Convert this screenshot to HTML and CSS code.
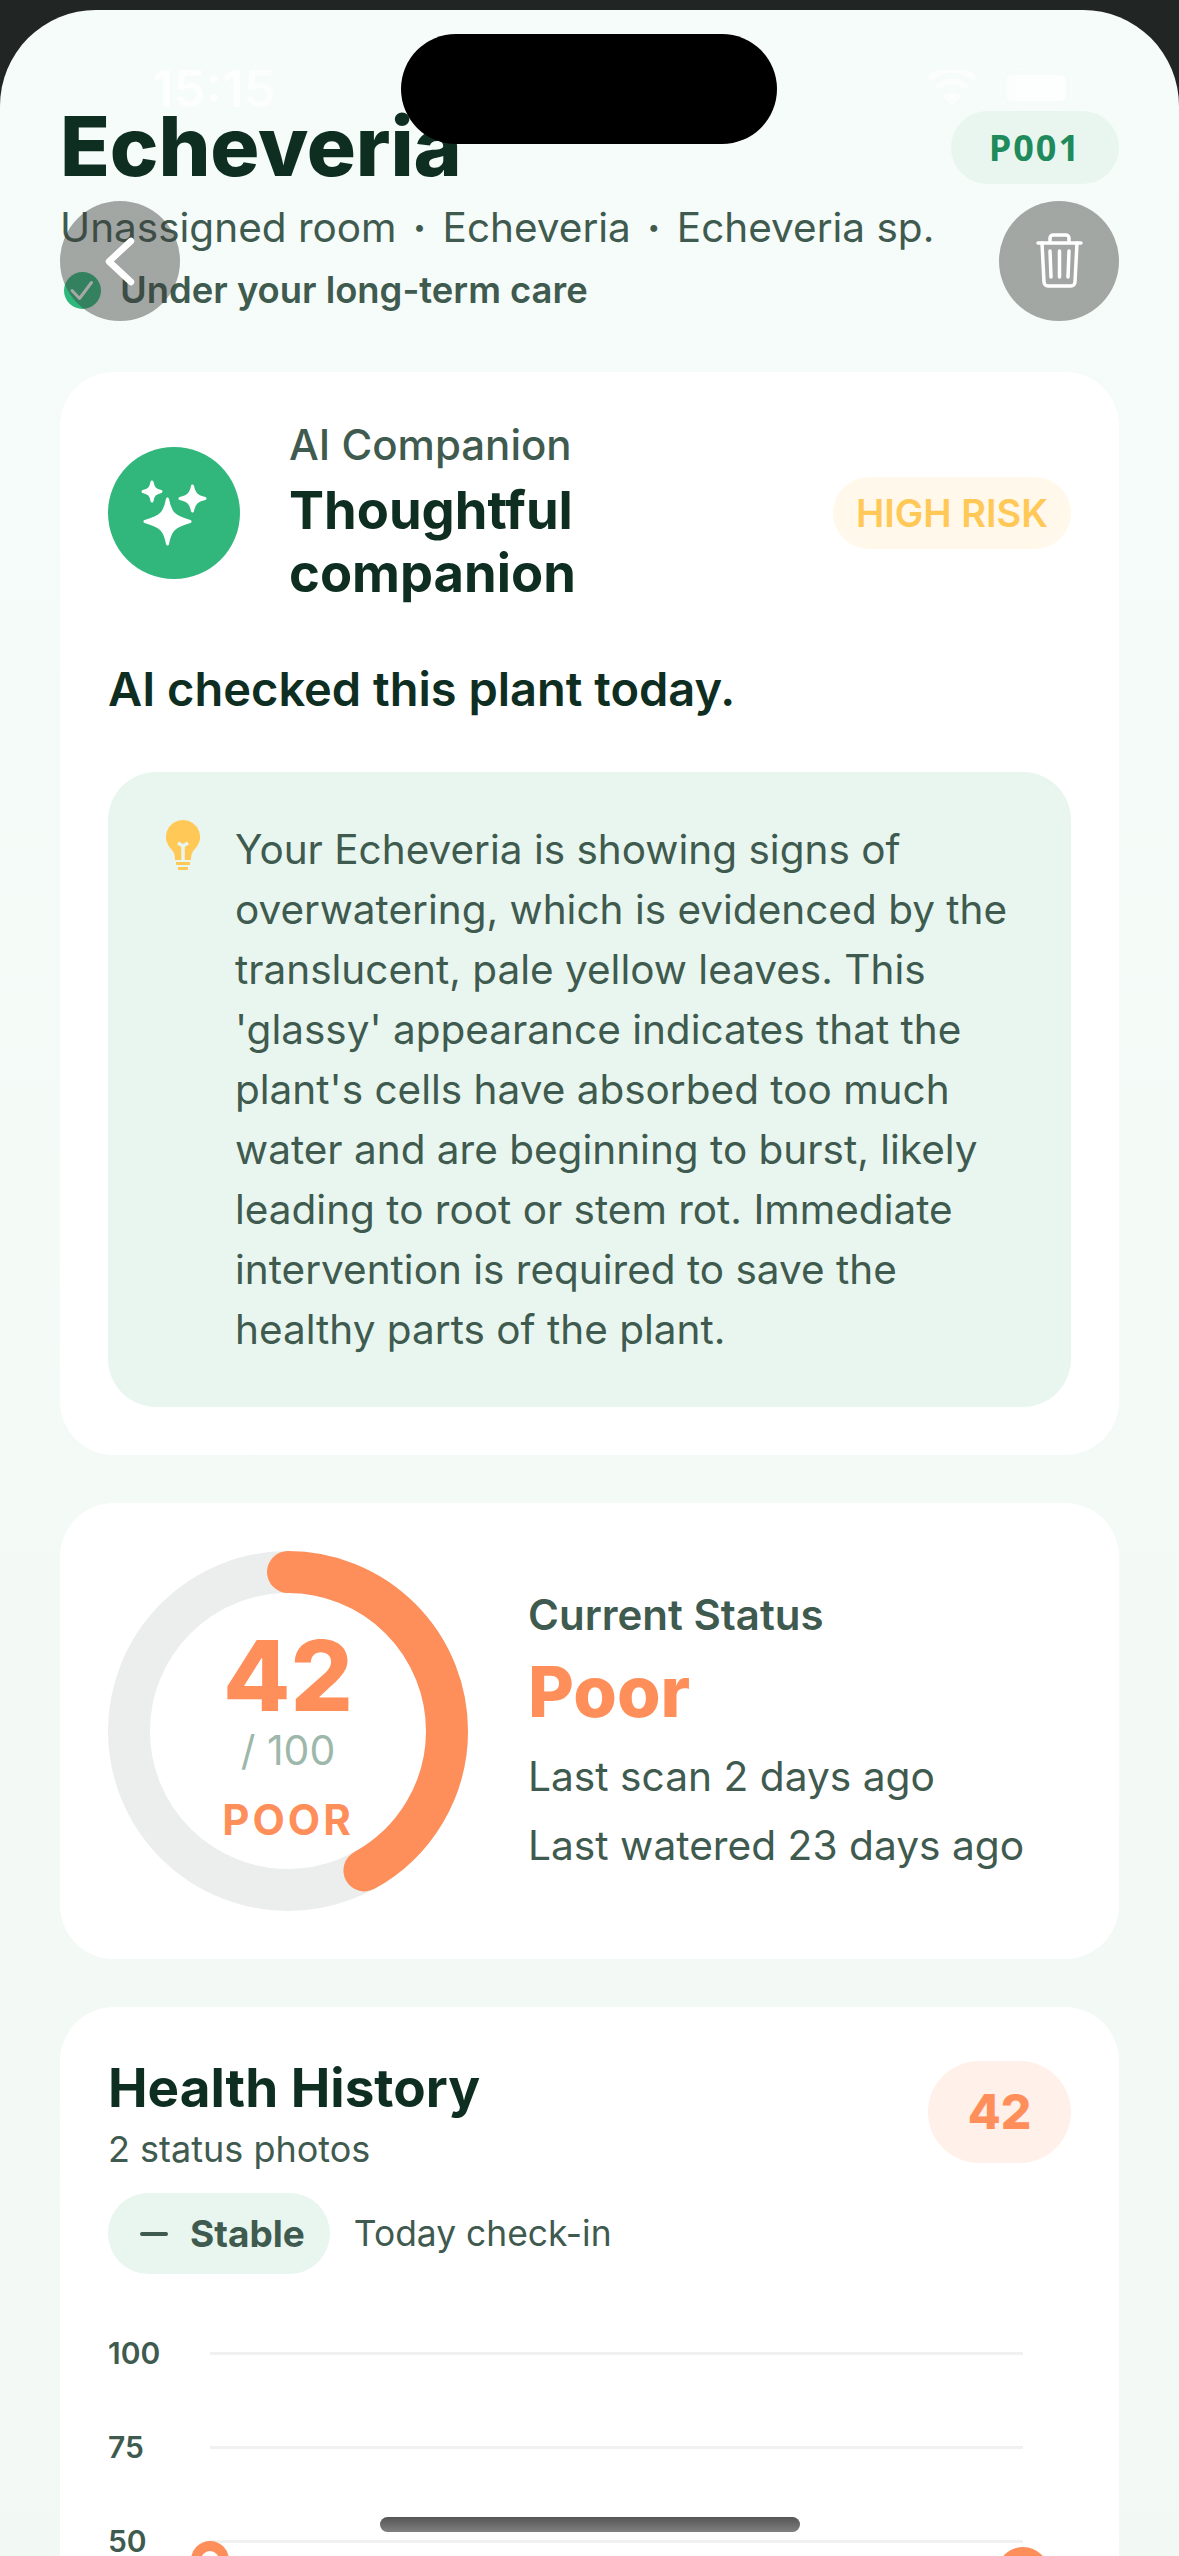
FILE: index.html
```html
<!DOCTYPE html>
<html>
<head>
	<title>Echeveria</title>
	<link rel="stylesheet" href="styles.css">
</head>
<body>
	<div class="screen">
		<div class="status-bar">
			<span class="clock">15:15</span>
			<div class="status-icons">
				<svg width="50" height="36" viewBox="0 0 50 36"><path d="M25 36 L16 26 A13 13 0 0 1 34 26 Z" fill="#fff"/><path d="M10 18 A21 21 0 0 1 40 18" fill="none" stroke="#fff" stroke-width="6"/><path d="M2 9 A33 33 0 0 1 48 9" fill="none" stroke="#fff" stroke-width="6"/></svg>
				<div class="battery"><div class="battery-fill"></div></div>
			</div>
		</div>
		<div class="island"></div>

		<header class="top">
			<div class="title-row">
				<h1 class="plant-name">Echeveria</h1>
				<span class="plant-id">P001</span>
			</div>
			<p class="plant-meta">Unassigned room<span class="sep">·</span>Echeveria<span class="sep">·</span>Echeveria sp.</p>
			<div class="care">
				<svg class="care-icon" width="37" height="37" viewBox="0 0 37 37"><circle cx="18.5" cy="18.5" r="18.5" fill="#2fb87c"/><path d="M8 18.5 L15.5 26.5 L27.5 10.5" fill="none" stroke="#fff" stroke-width="3" stroke-linecap="round" stroke-linejoin="round"/></svg>
				<span>Under your long-term care</span>
			</div>
		</header>

		<button class="round-btn back-btn">
			<svg width="32" height="54" viewBox="0 0 32 54"><path d="M27 7 L5 27.5 L27 48" fill="none" stroke="#fff" stroke-width="6.5" stroke-linecap="round" stroke-linejoin="round"/></svg>
		</button>
		<button class="round-btn trash-btn">
			<svg width="48" height="56" viewBox="0 0 48 56" fill="none" stroke="#fff" stroke-width="3.5" stroke-linecap="round" stroke-linejoin="round"><path d="M3 10 H46"/><path d="M15 9 V5 A3 3 0 0 1 18 2 H31 A3 3 0 0 1 34 5 V9"/><path d="M7 10 L9 49 A4 4 0 0 0 13 53 H36 A4 4 0 0 0 40 49 L42 10"/><path d="M15 18 L16 44"/><path d="M24.5 18 V44"/><path d="M34 18 L33 44"/></svg>
		</button>

		<section class="card ai-card">
			<div class="ai-head">
				<div class="ai-icon">
					<svg width="132" height="132" viewBox="0 0 132 132" fill="#fff" stroke="#fff" stroke-width="3" stroke-linejoin="round"><path d="M59.5 52 C62 66 66 70 82 74.5 C66 79 62 83 59.5 97 C57 83 53 79 37 74.5 C53 70 57 66 59.5 52 Z"/><path d="M44 35 C45 41 47 43 53 44.5 C47 46 45 48 44 54 C43 48 41 46 35 44.5 C41 43 43 41 44 35 Z"/><path d="M84.5 39 C86 47 89 49.5 97 51.5 C89 53.5 86 56 84.5 64 C83 56 80 53.5 72 51.5 C80 49.5 83 47 84.5 39 Z"/></svg>
				</div>
				<div class="ai-titles">
					<div class="ai-label">AI Companion</div>
					<div class="ai-name">Thoughtful<br>companion</div>
				</div>
				<span class="risk">HIGH RISK</span>
			</div>
			<p class="ai-check">AI checked this plant today.</p>
			<div class="tip">
				<svg class="tip-icon" width="34" height="51" viewBox="0 0 34 51"><path d="M17 0 A17 17 0 0 1 28 30 C26 32 25 35 25 40 H9 C9 35 8 32 6 30 A17 17 0 0 1 17 0 Z" fill="#ffc857"/><path d="M12 23 L17 26 L22 23 M17 26 V40" fill="none" stroke="#e8f6ef" stroke-width="3.5"/><rect x="10" y="42" width="14" height="3" fill="#ffc857"/><rect x="12" y="47" width="10" height="3" fill="#ffc857"/></svg>
				<p class="tip-text">Your Echeveria is showing signs of overwatering, which is evidenced by the translucent, pale yellow leaves. This 'glassy' appearance indicates that the plant's cells have absorbed too much water and are beginning to burst, likely leading to root or stem rot. Immediate intervention is required to save the healthy parts of the plant.</p>
			</div>
		</section>

		<section class="card status-card">
			<div class="ring">
				<svg width="360" height="360" viewBox="0 0 360 360">
					<circle cx="180" cy="180" r="159" fill="none" stroke="#eceeed" stroke-width="42"/>
					<circle cx="180" cy="180" r="159" fill="none" stroke="#ff8f5a" stroke-width="42" stroke-linecap="round" stroke-dasharray="419.6 999" transform="rotate(-90 180 180)"/>
				</svg>
				<div class="ring-text">
					<div class="ring-score">42</div>
					<div class="ring-max">/ 100</div>
					<div class="ring-label">POOR</div>
				</div>
			</div>
			<div class="status-info">
				<div class="status-label">Current Status</div>
				<div class="status-value">Poor</div>
				<div class="status-line">Last scan 2 days ago</div>
				<div class="status-line">Last watered 23 days ago</div>
			</div>
		</section>

		<section class="card history-card">
			<div class="history-head">
				<div>
					<h2 class="history-title">Health History</h2>
					<div class="history-sub">2 status photos</div>
				</div>
				<span class="history-score">42</span>
			</div>
			<div class="trend-row">
				<span class="trend"><span class="trend-dash"></span>Stable</span>
				<span class="trend-note">Today check-in</span>
			</div>
			<div class="chart">
				<div class="chart-row"><span class="chart-num">100</span><span class="chart-line"></span></div>
				<div class="chart-row"><span class="chart-num">75</span><span class="chart-line"></span></div>
				<div class="chart-row"><span class="chart-num">50</span><span class="chart-line"></span></div>
				<span class="point point-a"></span>
				<span class="point point-b"></span>
			</div>
		</section>

		<div class="home-bar"></div>
	</div>
</body>
</html>
```

FILE: styles.css
```css
*{
	box-sizing: border-box;
}
html, body{
	margin: 0;
	width: 1179px;
	height: 2556px;
	overflow: hidden;
	background: #212524;
}
body{
	padding-top: 10px;
	font-family: Inter, "Noto Sans", sans-serif;
	color: #3f5a4e;
}
.screen{
	position: relative;
	height: 2546px;
	overflow: hidden;
	border-radius: 96px 96px 0 0;
	background: linear-gradient(180deg, #f6fcf9 0%, #f2f8f4 100%);
	padding: 88px 60px 0;
}
h1, h2, p{
	margin: 0;
}

.status-bar{
	position: absolute;
	top: 56px;
	left: 152px;
	right: 107px;
	height: 44px;
	display: flex;
	justify-content: space-between;
	align-items: center;
	opacity: 0.75;
	color: #fff;
}
.clock{
	font-size: 51px;
	font-weight: 600;
}
.status-icons{
	display: flex;
	align-items: center;
	gap: 23px;
}
.battery{
	width: 72px;
	height: 38px;
	padding: 5px;
	border: 1px solid rgba(255, 255, 255, 0.5);
	border-radius: 12px;
}
.battery-fill{
	height: 100%;
	border-radius: 6px;
	background: #fff;
}
.island{
	position: absolute;
	top: 24px;
	left: 401px;
	width: 376px;
	height: 110px;
	border-radius: 55px;
	background: #000;
}

.title-row{
	display: flex;
	justify-content: space-between;
	align-items: center;
}
.plant-name{
	font-size: 82px;
	font-weight: 800;
	line-height: 98px;
	color: #0f2e22;
	letter-spacing: -0.2px;
}
.plant-id{
	display: block;
	padding: 0 38px;
	height: 73px;
	line-height: 73px;
	border-radius: 37px;
	background: #e8f6ef;
	color: #1f8a5b;
	font-family: "Open Sans", sans-serif;
	font-size: 36px;
	font-weight: 700;
	letter-spacing: 2px;
}
.plant-meta{
	margin-top: 4px;
	font-size: 40.5px;
	line-height: 56px;
}
.sep{
	display: inline-block;
	width: 46px;
	text-align: center;
	font-weight: 700;
}
.care{
	margin-top: 11px;
	display: flex;
	align-items: center;
	gap: 19px;
	padding-left: 4px;
	font-size: 36.4px;
	font-weight: 600;
	line-height: 46px;
}
.round-btn{
	position: absolute;
	top: 191px;
	width: 120px;
	height: 120px;
	border: none;
	border-radius: 50%;
	padding: 0;
	display: flex;
	align-items: center;
	justify-content: center;
	background: rgba(60, 62, 60, 0.45);
}
.back-btn{
	left: 60px;
}
.trash-btn{
	right: 60px;
}

.card{
	background: #fff;
	border-radius: 54px;
	padding: 48px;
	margin-bottom: 48px;
}
.ai-card{
	margin-top: 59px;
}
.ai-head{
	display: flex;
	align-items: center;
}
.ai-icon{
	width: 132px;
	height: 132px;
	border-radius: 50%;
	background: #31b77c;
	flex-shrink: 0;
}
.ai-titles{
	margin-left: 49px;
	flex: 1;
}
.ai-label{
	font-size: 42px;
	font-weight: 500;
	line-height: 50px;
}
.ai-name{
	margin-top: 9px;
	font-size: 52.5px;
	font-weight: 700;
	line-height: 63px;
	color: #0f2e22;
}
.risk{
	width: 238px;
	height: 72px;
	line-height: 72px;
	text-align: center;
	border-radius: 36px;
	background: #fff8eb;
	color: #ffc857;
	font-size: 38px;
	font-weight: 600;
}
.ai-check{
	margin-top: 54px;
	font-size: 47px;
	font-weight: 600;
	line-height: 60px;
	color: #0f2e22;
}
.tip{
	margin-top: 53px;
	padding: 48px 58px 47px;
	border-radius: 48px;
	background: #e8f6ef;
	display: flex;
	gap: 35px;
	align-items: flex-start;
}
.tip-icon{
	flex-shrink: 0;
}
.tip-text{
	font-size: 40.5px;
	line-height: 60px;
}

.status-card{
	display: flex;
	align-items: center;
	gap: 60px;
}
.ring{
	position: relative;
	width: 360px;
	height: 360px;
	flex-shrink: 0;
}
.ring-text{
	position: absolute;
	top: 0;
	left: 0;
	width: 100%;
	height: 100%;
	padding-top: 8px;
	display: flex;
	flex-direction: column;
	align-items: center;
	justify-content: center;
}
.ring-score{
	font-size: 98px;
	font-weight: 800;
	line-height: 100px;
	color: #ff8f5a;
}
.ring-max{
	margin-top: -1px;
	font-size: 41px;
	line-height: 50px;
	color: #9db8ab;
}
.ring-label{
	margin-top: 20px;
	font-size: 42px;
	font-weight: 700;
	line-height: 50px;
	letter-spacing: 3px;
	color: #ff8f5a;
}
.status-label{
	font-size: 42px;
	font-weight: 600;
	line-height: 54px;
}
.status-value{
	margin-top: 6px;
	font-size: 70.5px;
	font-weight: 800;
	line-height: 88px;
	color: #ff8f5a;
}
.status-line{
	margin-top: 13px;
	font-size: 40.7px;
	line-height: 56px;
}

.history-head{
	display: flex;
	justify-content: space-between;
	align-items: flex-start;
}
.history-title{
	font-size: 53px;
	font-weight: 700;
	line-height: 66px;
	color: #0f2e22;
}
.history-sub{
	margin-top: 5px;
	font-size: 36px;
	line-height: 46px;
}
.history-score{
	margin-top: 6px;
	width: 143px;
	height: 102px;
	line-height: 102px;
	text-align: center;
	border-radius: 51px;
	background: #fff0e9;
	color: #ff8f5a;
	font-size: 48px;
	font-weight: 800;
}
.trend-row{
	margin-top: 21px;
	display: flex;
	align-items: center;
	gap: 24px;
}
.trend{
	display: flex;
	align-items: center;
	height: 81px;
	padding: 0 25px 0 32px;
	border-radius: 41px;
	background: #e8f6ef;
	font-size: 37px;
	font-weight: 700;
}
.trend-dash{
	width: 28px;
	height: 4px;
	border-radius: 2px;
	background: #3f5a4e;
	margin-right: 22px;
}
.trend-note{
	font-size: 35.4px;
}
.chart{
	position: relative;
	margin-top: 32px;
}
.chart-row{
	display: flex;
	align-items: center;
	height: 94px;
}
.chart-num{
	width: 102px;
	font-size: 30px;
	font-weight: 600;
}
.chart-line{
	width: 813px;
	height: 3px;
	background: #f0f1f0;
}
.point{
	position: absolute;
	border-radius: 50%;
	background: #fff;
}
.point-a{
	left: 83px;
	top: 235px;
	width: 38px;
	height: 38px;
	border: 10px solid #ff8f5a;
}
.point-b{
	left: 889px;
	top: 241px;
	width: 52px;
	height: 52px;
	border: 9px solid #ff8f5a;
}
.home-bar{
	position: absolute;
	left: 380px;
	top: 2507px;
	width: 420px;
	height: 15px;
	border-radius: 8px;
	background: linear-gradient(180deg, #555 0%, #808080 100%);
}
```
